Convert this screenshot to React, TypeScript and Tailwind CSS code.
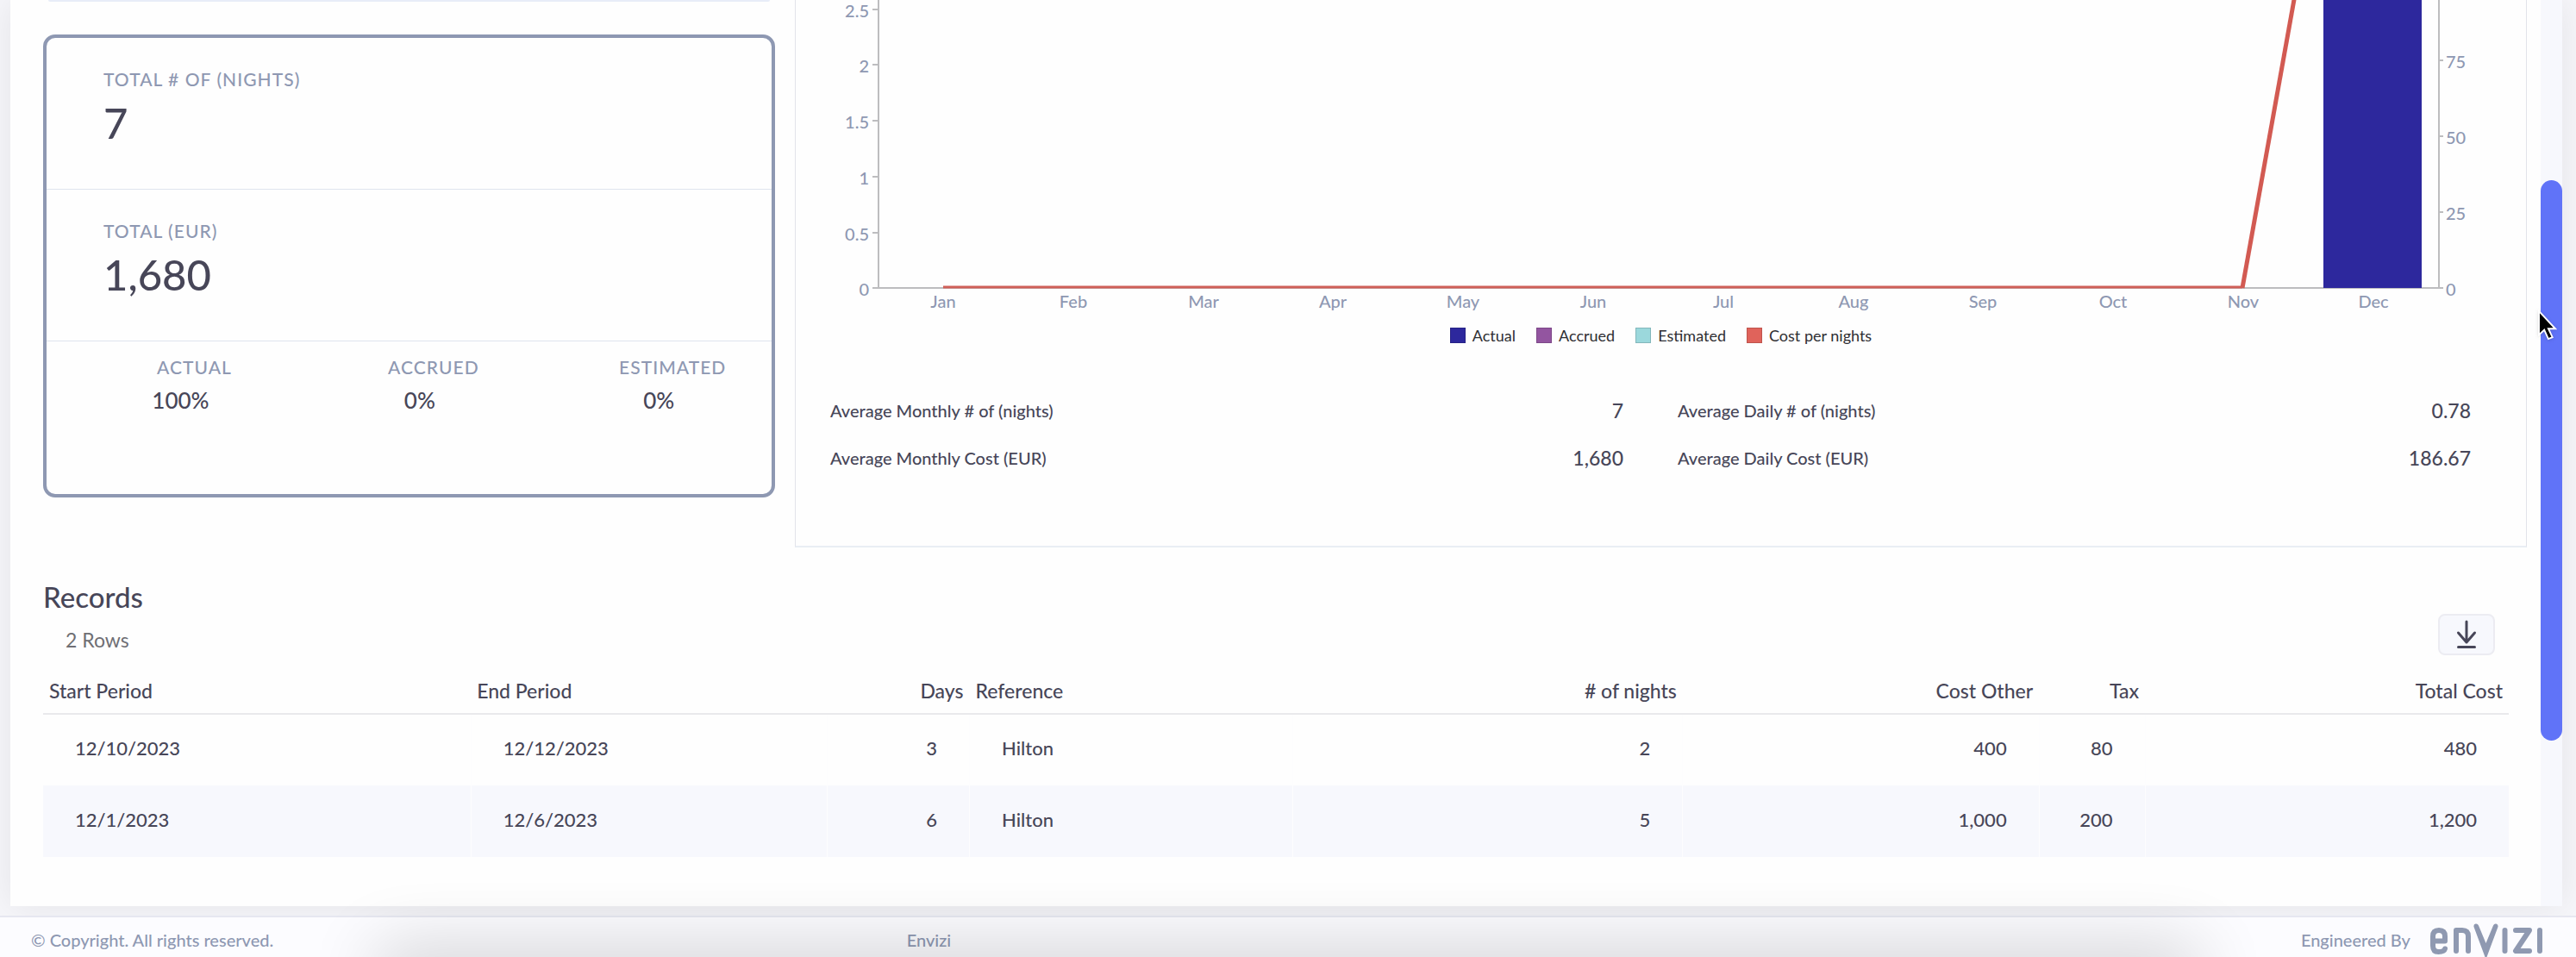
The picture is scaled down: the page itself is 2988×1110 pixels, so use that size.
import React from "react";

const MONTHS = ["Jan", "Feb", "Mar", "Apr", "May", "Jun", "Jul", "Aug", "Sep", "Oct", "Nov", "Dec"];
const LEFT_TICKS = [
  { y: 11, label: "2.5" },
  { y: 75, label: "2" },
  { y: 140, label: "1.5" },
  { y: 205, label: "1" },
  { y: 270, label: "0.5" },
  { y: 334, label: "0" },
];
const RIGHT_TICKS = [
  { y: 70, label: "75" },
  { y: 158, label: "50" },
  { y: 246, label: "25" },
  { y: 334, label: "0" },
];

function Chart() {
  return (
    <svg viewBox="0 0 2007 364" className="block w-full" role="img" aria-label="Monthly nights and cost per night">
      <g stroke="#bdbdbf" strokeWidth="2" fill="none">
        <path d="M96 0V334H1906V0" />
        {LEFT_TICKS.map((t) => (
          <path key={t.label} d={`M89 ${t.y}H96`} />
        ))}
        {RIGHT_TICKS.map((t) => (
          <path key={t.label} d={`M1906 ${t.y}H1911`} />
        ))}
      </g>
      <rect x="1772" y="0" width="114" height="334" fill="#2d289d" />
      <path d="M171 333H1678" fill="none" stroke="#cf5f58" strokeWidth="3" />
      <path d="M1678 334L1739 -6" fill="none" stroke="#d25a52" strokeWidth="5" />
      <g className="fill-[#8e98b2] text-[20px] font-medium">
        {LEFT_TICKS.map((t) => (
          <text key={t.label} x="85" y={t.y + 9} textAnchor="end">
            {t.label}
          </text>
        ))}
        {RIGHT_TICKS.map((t) => (
          <text key={t.label} x="1914" y={t.y + 9}>
            {t.label}
          </text>
        ))}
        {MONTHS.map((m, i) => (
          <text key={m} x={171 + Math.round(i * 150.8)} y="357" textAnchor="middle">
            {m}
          </text>
        ))}
      </g>
    </svg>
  );
}

function LegendItem({ swatch, label }: { swatch: string; label: string }) {
  return (
    <li className="flex items-center gap-2">
      <span className={`size-[18px] border border-black/15 ${swatch}`} />
      {label}
    </li>
  );
}

function Total({ label, value }: { label: string; value: string }) {
  return (
    <div className="border-b border-[#dfe5ee] pt-[34px] pr-6 pb-[47px] pl-[66px]">
      <div className="text-[21px] leading-7 font-medium tracking-wider text-[#8e98b2]">{label}</div>
      <div className="mt-1.5 text-[49px] leading-[60px] font-medium">{value}</div>
    </div>
  );
}

function Share({ label, value }: { label: string; value: string }) {
  return (
    <div className="pl-32">
      <div className="inline-block">
        <div className="text-[21px] leading-7 font-medium tracking-wider text-[#8e98b2]">{label}</div>
        <div className="mt-2 -ml-8 text-center text-[26px] leading-8 font-medium">{value}</div>
      </div>
    </div>
  );
}

function Average({ label, value }: { label: string; value: string }) {
  return (
    <div className="flex items-center justify-between">
      <dt className="text-[20px] leading-7 font-medium">{label}</dt>
      <dd className="text-[23px] leading-7 font-medium">{value}</dd>
    </div>
  );
}

const COLUMNS = [
  { title: "Start Period", width: "w-[17.35%]", align: "text-left" },
  { title: "End Period", width: "w-[14.45%]", align: "text-left" },
  { title: "Days", width: "w-[5.77%]", align: "text-right" },
  { title: "Reference", width: "w-[13.1%]", align: "text-left" },
  { title: "# of nights", width: "w-[15.83%]", align: "text-right" },
  { title: "Cost Other", width: "w-[14.45%]", align: "text-right" },
  { title: "Tax", width: "w-[4.3%]", align: "text-right" },
  { title: "Total Cost", width: "w-[14.75%]", align: "text-right" },
];
const ROWS = [
  ["12/10/2023", "12/12/2023", "3", "Hilton", "2", "400", "80", "480"],
  ["12/1/2023", "12/6/2023", "6", "Hilton", "5", "1,000", "200", "1,200"],
];

function RecordsTable() {
  return (
    <table className="mt-[15px] w-full table-fixed border-collapse text-[23px] leading-8 font-medium">
      <thead>
        <tr className="h-[53px] border-b-2 border-[#e9e9ec]">
          {COLUMNS.map((c) => (
            <th key={c.title} scope="col" className={`px-[7px] font-medium whitespace-nowrap ${c.width} ${c.align}`}>
              {c.title}
            </th>
          ))}
        </tr>
      </thead>
      <tbody>
        {ROWS.map((row) => (
          <tr key={row[0]} className="h-[83px] text-[22px] even:bg-[#f7f8fd]">
            {row.map((cell, i) => (
              <td key={COLUMNS[i].title} className={`border-r border-[#fdfdfe] px-[37px] pb-1 last:border-r-0 ${COLUMNS[i].align}`}>
                {cell}
              </td>
            ))}
          </tr>
        ))}
      </tbody>
    </table>
  );
}

function EnviziLogo() {
  return (
    <svg viewBox="0 0 132 40" className="block h-10 w-[132px]" role="img" aria-label="Envizi">
      <g fill="none" stroke="#8f99b1" strokeWidth="6" strokeLinecap="round" strokeLinejoin="round">
        <path d="M18 29.5Q17 33 10.500 33Q4 33 4 26V15Q4 8 11 8Q18 8 18 15V20.500H5" />
        <path d="M31 32V8H38Q45 8 45 15V32" />
        <path d="M87.500 8V32" />
        <path d="M100 8H116L100 32H116" />
        <path d="M128 8V32" />
      </g>
      <path d="M51.500 4Q51 1 53.500 .5Q56 0 57 2.500L65.500 23L74 2.500Q75 0 77.500 .5Q80 1.500 79.500 4L66.500 39Q65.500 41 64.500 39Z" fill="#8f99b1" />
    </svg>
  );
}

function Footer() {
  return (
    <footer className="relative grid grow grid-cols-[1015fr_1616fr_auto] items-start overflow-hidden border-t-2 border-[#e6e7f0] bg-[#fcfcff] pr-[38px] pl-9 text-[20px] leading-7 font-medium text-[#8e98b2]">
      <span className="pt-3">© Copyright. All rights reserved.</span>
      <span className="pt-3">Envizi</span>
      <div className="flex items-start gap-[22px]">
        <span className="pt-3">Engineered By</span>
        <span className="pt-[7px]">
          <EnviziLogo />
        </span>
      </div>
    </footer>
  );
}

export default function App() {
  return (
    <div className="relative flex min-h-screen flex-col overflow-hidden bg-[#fcfcff] font-['Lato','Noto_Sans',sans-serif] text-[#474658]">
      <div className="bg-[#f6f6fa] pr-4 pb-[11px] pl-3">
        <div className="flex bg-[#fefefe] shadow-[0_0_40px_rgba(0,0,0,0.08)]">
          <main className="min-w-0 grow pr-4 pb-[57px] pl-[38px]">
            <section className="grid grid-cols-[849fr_2009fr] gap-[23px]">
              <div>
                <div className="mx-1.5 h-0.5 rounded-b bg-[#e8edf8]" />
                <div className="mt-[38px] rounded-[14px] border-4 border-[#8e98b2]">
                  <Total label="TOTAL # OF (NIGHTS)" value="7" />
                  <Total label="TOTAL (EUR)" value="1,680" />
                  <div className="grid grid-cols-3 pt-4 pr-[37px] pb-[93px]">
                    <Share label="ACTUAL" value="100%" />
                    <Share label="ACCRUED" value="0%" />
                    <Share label="ESTIMATED" value="0%" />
                  </div>
                </div>
              </div>
              <div className="border-x border-b-2 border-x-[#e2e3ea] border-b-[#e9eef4] pb-[88px]">
                <Chart />
                <ul className="mt-[13px] flex justify-center gap-6 text-[18px] leading-6 text-[#2f2f33]">
                  <LegendItem swatch="bg-[#2d289d]" label="Actual" />
                  <LegendItem swatch="bg-[#9355a0]" label="Accrued" />
                  <LegendItem swatch="bg-[#9bd8dc]" label="Estimated" />
                  <LegendItem swatch="bg-[#e0635b]" label="Cost per nights" />
                </ul>
                <dl className="mt-[61px] grid grid-cols-2 gap-x-[63px] gap-y-[27px] pr-16 pl-10">
                  <Average label="Average Monthly # of (nights)" value="7" />
                  <Average label="Average Daily # of (nights)" value="0.78" />
                  <Average label="Average Monthly Cost (EUR)" value="1,680" />
                  <Average label="Average Daily Cost (EUR)" value="186.67" />
                </dl>
              </div>
            </section>
            <section className="mt-[38px] pr-[21px]">
              <h2 className="text-[33px] leading-[39px] font-medium">Records</h2>
              <div className="flex items-end justify-between pr-4 pl-[26px]">
                <span className="pb-0.5 text-[23px] leading-8 text-[#6f6f74]">2 Rows</span>
                <button
                  type="button"
                  aria-label="Download records"
                  className="flex h-12 w-[66px] items-center justify-center rounded-lg border-2 border-[#ececf2] bg-[#f7f8fd]"
                >
                  <svg viewBox="0 0 24 34" className="h-[34px] w-6" fill="none" stroke="#474658" strokeWidth="3" strokeLinecap="round" strokeLinejoin="round">
                    <path d="M12 2V26M2.500 15L12 26L21.500 15M2.500 31.500H21.500" />
                  </svg>
                </button>
              </div>
              <RecordsTable />
            </section>
          </main>
          <div className="flex w-[25px] shrink-0 flex-col bg-[#f7f8fd]">
            <div className="grow-[209]" />
            <div className="grow-[649] rounded-full bg-[#6073f8]" />
            <div className="grow-[192]" />
          </div>
        </div>
      </div>
      <Footer />
      <div className="pointer-events-none absolute top-full right-[15%] left-[15%] h-10 shadow-[0_0_80px_10px_rgba(0,0,0,0.19)]" />
      <svg viewBox="0 0 24 38" className="pointer-events-none absolute top-[359px] right-[22px] h-9 w-[23px] drop-shadow" aria-hidden="true">
        <path d="M2 2V31L8.500 25L13.500 36L18.500 34L13.500 23.500H22Z" fill="#000" stroke="#fff" strokeWidth="2" />
      </svg>
    </div>
  );
}
